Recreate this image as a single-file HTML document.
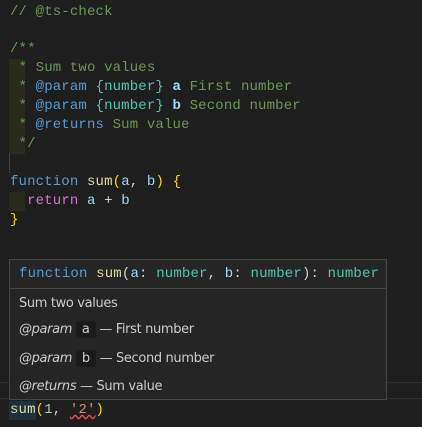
<!DOCTYPE html>
<html><head><style>
html,body{margin:0;padding:0;background:#1e1e1e;width:422px;height:427px;overflow:hidden;position:relative}
.l{position:absolute;left:10px;font:14px/19px "Liberation Mono",monospace;letter-spacing:0.15px;white-space:pre;color:#d4d4d4}
.c{color:#6a9955}.k{color:#569cd6}.t{color:#4ec9b0}.f{color:#dcdcaa}.v{color:#9cdcfe}.y{color:#ffd700}.p{color:#da70d6}.s{color:#ce9178}.n{color:#b5cea8}
#hov{position:absolute;left:9px;top:259px;width:378px;height:141px;background:#252526;border:1px solid #454545;box-sizing:border-box}
#hh{height:28px;border-bottom:1px solid #454545;font:14px/28px "Liberation Mono",monospace;letter-spacing:0.17px;padding-left:9px;white-space:pre;color:#d4d4d4}
.d{position:absolute;left:9px;font:13px "DejaVu Sans","Liberation Sans",sans-serif;color:#cccccc;letter-spacing:-0.35px}
.d i{font-style:italic}
.code{display:inline-block;background:#1a1a1a;padding:0 6px;border-radius:3px;line-height:17px}
</style></head><body>
<div style="position:absolute;left:9px;top:59px;width:16px;height:95px;background:#2a2a1e"></div>
<div style="position:absolute;left:9px;top:192px;width:16px;height:19px;background:#2a2a1e"></div>
<div style="position:absolute;left:9px;top:153px;width:1px;height:20px;background:#404040"></div>
<div class="l c" style="top:3px">// @ts-check</div>
<div class="l c" style="top:40px">/**</div>
<div class="l c" style="top:59px"> * Sum two values</div>
<div class="l c" style="top:78px"> * <span class="k">@param</span> <span class="t">{number}</span> <span class="v" style="font-weight:bold">a</span> First number</div>
<div class="l c" style="top:97px"> * <span class="k">@param</span> <span class="t">{number}</span> <span class="v" style="font-weight:bold">b</span> Second number</div>
<div class="l c" style="top:116px"> * <span class="k">@returns</span> Sum value</div>
<div class="l c" style="top:135px"> */</div>
<div class="l" style="top:173px"><span class="k">function</span> <span class="f">sum</span><span class="y">(</span><span class="v">a</span>, <span class="v">b</span><span class="y">)</span> <span class="y">{</span></div>
<div class="l" style="top:192px">  <span class="p">return</span> <span class="v">a</span> + <span class="v">b</span></div>
<div class="l" style="top:211px"><span class="y">}</span></div>
<div style="position:absolute;left:0;top:382px;width:422px;height:17px;border-top:1px solid #2f2f2f;border-bottom:1px solid #2f2f2f;box-sizing:border-box"></div>
<div style="position:absolute;left:9px;top:401px;width:27px;height:19px;background:#264f78;opacity:.35"></div>
<div class="l" style="top:401px"><span class="f">sum</span><span class="y">(</span><span class="n">1</span>, <span class="s" style="text-decoration:underline wavy #f14c4c">'2'</span><span class="y">)</span></div>
<div id="hov">
<div id="hh"><span class="k">function</span> <span class="f">sum</span>(<span class="v">a</span>: <span class="t">number</span>, <span class="v">b</span>: <span class="t">number</span>): <span class="t">number</span></div>
<div class="d" style="top:36px">Sum two values</div>
<div class="d" style="top:61px"><i>@param</i> <span class="code">a</span> — First number</div>
<div class="d" style="top:90px"><i>@param</i> <span class="code">b</span> — Second number</div>
<div class="d" style="top:119px"><i>@returns</i> — Sum value</div>
</div>
</body></html>
